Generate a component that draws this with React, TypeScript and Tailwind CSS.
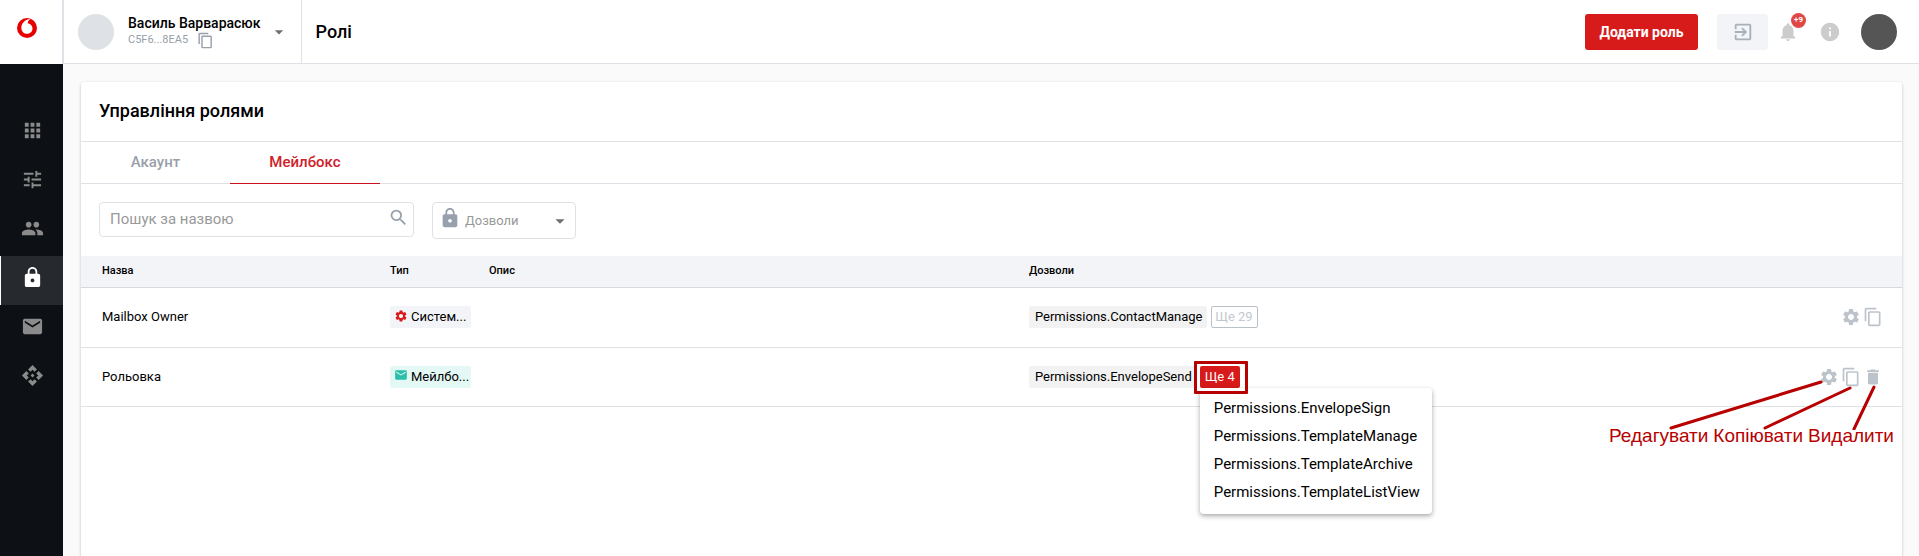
import type { ReactNode } from "react";
import {
  MdApi,
  MdApps,
  MdArrowDropDown,
  MdContentCopy,
  MdDelete,
  MdEmail,
  MdExitToApp,
  MdGroup,
  MdInfo,
  MdLock,
  MdNotifications,
  MdSearch,
  MdSettings,
  MdTune,
} from "react-icons/md";

const navItems = [
  { label: "Застосунки", icon: <MdApps size={23} /> },
  { label: "Налаштування", icon: <MdTune size={23} /> },
  { label: "Користувачі", icon: <MdGroup size={23} /> },
  { label: "Ролі", icon: <MdLock size={23} />, active: true },
  { label: "Пошта", icon: <MdEmail size={23} /> },
  { label: "API", icon: <MdApi size={23} /> },
];

const hiddenPermissions = [
  "Permissions.EnvelopeSign",
  "Permissions.TemplateManage",
  "Permissions.TemplateArchive",
  "Permissions.TemplateListView",
];

function Logo() {
  return (
    <svg viewBox="0 0 20 20" className="size-5" aria-hidden="true">
      <circle cx="10" cy="10" r="10" fill="#e60000" />
      <path
        d="M10.1 15.8c-3 0-5.800-2.300-5.800-6.100C4.300 7.100 5.700 4.700 7.500 3.200 9.200 1.800 11.400 1 13.500 1c.2 0 .4 0 .5.1-1.800.4-3.200 2-3.200 3.900v.2c3.100.8 4.700 2.700 4.700 5.300 0 2.800-2.200 5.300-5.400 5.300z"
        fill="#fff"
      />
    </svg>
  );
}

function Sidebar() {
  return (
    <aside className="flex w-[63px] shrink-0 flex-col bg-[#0d1014]">
      <a
        href="#home"
        aria-label="Головна"
        className="flex h-16 items-start border-r border-[#dee2e6] bg-white pt-[18px] pl-[17px]"
      >
        <Logo />
      </a>
      <nav className="flex flex-col pt-[45px]">
        {navItems.map((item) => (
          <a
            key={item.label}
            href="#nav"
            aria-label={item.label}
            className={
              item.active
                ? "flex h-[49px] items-start justify-center border-l border-white bg-[#26292d] pt-[10px] text-white"
                : "flex h-[49px] items-start justify-center border-l border-transparent pt-[10px] text-[#8b8b8b]"
            }
          >
            {item.icon}
          </a>
        ))}
      </nav>
    </aside>
  );
}

function Header() {
  return (
    <header className="flex h-16 shrink-0 items-center border-b border-[#dee2e6] bg-white">
      <div className="flex h-full items-center border-x border-[#dee2e6] pr-3 pl-[14px]">
        <span className="size-9 rounded-full bg-[#dee2e6]" />
        <div className="ml-[14px] flex flex-col">
          <span className="text-sm leading-[18px] font-medium">Василь Варварасюк</span>
          <span className="flex h-[18px] items-center gap-[9px] text-[11px] text-[#98a0aa]">
            C5F6...8EA5
            <button type="button" aria-label="Копіювати">
              <MdContentCopy size={17} />
            </button>
          </span>
        </div>
        <button type="button" aria-label="Змінити акаунт" className="ml-2 text-[#6b7075]">
          <MdArrowDropDown size={20} />
        </button>
      </div>
      <h1 className="flex-1 pl-[14px] text-lg font-medium">Ролі</h1>
      <div className="flex items-center pr-[22px]">
        <button
          type="button"
          className="h-9 w-[113px] rounded-[3px] bg-[#d71a1a] text-sm font-bold text-white"
        >
          Додати роль
        </button>
        <button
          type="button"
          aria-label="Увійти"
          className="ml-[19px] flex h-9 w-[51px] items-center justify-center rounded-[3px] bg-[#f3f4f7] text-[#a8b0b8]"
        >
          <MdExitToApp size={22} />
        </button>
        <button type="button" aria-label="Сповіщення" className="relative ml-[9px] text-[#ccc]">
          <MdNotifications size={22} />
          <span className="absolute -top-2 left-[14px] flex size-[15px] items-center justify-center rounded-full bg-[#e04848] text-[8px] leading-none font-bold text-white">
            +9
          </span>
        </button>
        <button type="button" aria-label="Інформація" className="ml-5 text-[#ccc]">
          <MdInfo size={22} />
        </button>
        <span className="ml-5 size-9 rounded-full bg-[#555]" />
      </div>
    </header>
  );
}

function Filters() {
  return (
    <div className="flex items-start gap-[18px] px-[18px] pt-[18px] pb-[17px]">
      <label className="flex h-[35px] w-[315px] items-center rounded-[4px] border border-[#dee2e6] pr-1 pl-[10px]">
        <input
          type="text"
          aria-label="Пошук за назвою"
          placeholder="Пошук за назвою"
          className="min-w-0 flex-1 text-[15px] outline-none placeholder:text-[#999]"
        />
        <MdSearch size={21} className="mb-1 text-[#98a0aa]" />
      </label>
      <div className="relative flex h-[37px] w-36 items-center rounded-[4px] border border-[#dee2e6]">
        <MdLock size={22} className="absolute top-1 left-[6px] text-[#98a0ae]" />
        <select
          aria-label="Дозволи"
          className="h-full w-full appearance-none pl-8 text-[13px] text-[#999] outline-none"
        >
          <option>Дозволи</option>
        </select>
        <MdArrowDropDown size={22} className="pointer-events-none absolute right-1 text-[#6b7075]" />
      </div>
    </div>
  );
}

function Action({ label, children }: { label: string; children: ReactNode }) {
  return (
    <button type="button" aria-label={label} className="flex w-[22px] justify-center">
      {children}
    </button>
  );
}

function ActionNotes() {
  return (
    <div className="pointer-events-none absolute top-[28px] right-[8px] w-[285px] text-[#b80000]">
      <svg
        viewBox="0 0 285 54"
        className="block h-[54px] w-full"
        fill="none"
        stroke="currentColor"
        strokeWidth="3"
        strokeLinecap="round"
        aria-hidden="true"
      >
        <path d="M62 52 212 6M156 52 241 12M245 53 265 11" />
      </svg>
      <div className="-mt-1 flex justify-between font-['Liberation_Sans',sans-serif] text-[19px] leading-5 whitespace-nowrap">
        <span>Редагувати</span>
        <span>Копіювати</span>
        <span>Видалити</span>
      </div>
    </div>
  );
}

function PermissionsMenu() {
  return (
    <div className="relative">
      <button
        type="button"
        aria-expanded="true"
        className="block h-[22px] w-10 rounded-[2px] bg-[#d71a1a] text-[13px] leading-[22px] text-white"
      >
        Ще 4
      </button>
      <ul className="absolute top-[22px] left-0 z-10 rounded-[4px] bg-white pt-[6px] pr-3 pb-2 pl-[14px] text-[15px] leading-7 whitespace-nowrap shadow-[0_2px_5px_rgba(0,0,0,0.35)]">
        {hiddenPermissions.map((name) => (
          <li key={name}>{name}</li>
        ))}
      </ul>
      <span className="pointer-events-none absolute -top-[5px] -left-[6px] z-20 h-[33px] w-[54px] rounded-[1px] border-3 border-[#b80000] shadow-[inset_0_0_0_2px_#fff]" />
    </div>
  );
}

function RolesTable() {
  return (
    <table className="w-full table-fixed border-separate border-spacing-0 text-left text-[13px]">
      <colgroup>
        <col className="w-[299px]" />
        <col className="w-[99px]" />
        <col className="w-[29.65%]" />
        <col />
        <col className="w-[150px]" />
      </colgroup>
      <thead>
        <tr className="h-8 bg-[#f3f4f7] text-[11px] *:border-b *:border-[#d5d8dc]">
          <th className="pl-[21px] font-medium">Назва</th>
          <th className="pl-[10px] font-medium">Тип</th>
          <th className="pl-[10px] font-medium">Опис</th>
          <th className="pl-[10px] font-medium">Дозволи</th>
          <th aria-label="Дії" />
        </tr>
      </thead>
      <tbody>
        <tr className="h-[60px] *:border-b *:border-[#dee2e6] *:pb-px">
          <td className="pl-[21px]">Mailbox Owner</td>
          <td className="pl-[10px]">
            <span className="flex h-[22px] w-[81px] items-center gap-[3px] rounded-[2px] bg-[#f3f4f7] pl-1">
              <MdSettings size={14} className="mb-[3px] shrink-0 text-[#d71a1a]" />
              Систем...
            </span>
          </td>
          <td />
          <td className="pl-[10px]">
            <div className="flex gap-1">
              <span className="rounded-[2px] bg-[#f2f2f2] pr-1 pl-[6px] leading-[22px]">
                Permissions.ContactManage
              </span>
              <button
                type="button"
                className="h-[22px] w-[47px] rounded-[2px] border border-[#b9c0c8] leading-5 text-[#c4c8ce]"
              >
                Ще 29
              </button>
            </div>
          </td>
          <td>
            <div className="flex justify-end pr-[18px] text-[#bcc3cb]">
              <Action label="Редагувати">
                <MdSettings size={20} />
              </Action>
              <Action label="Копіювати">
                <MdContentCopy size={20} />
              </Action>
            </div>
          </td>
        </tr>
        <tr className="h-[59px] *:border-b *:border-[#dee2e6] *:pb-px">
          <td className="pl-[21px]">Рольовка</td>
          <td className="pl-[10px]">
            <span className="flex h-[22px] w-[81px] items-center gap-[3px] rounded-[2px] bg-[#e4f8f5] pl-1">
              <MdEmail size={14} className="mb-[3px] shrink-0 text-[#2bbfa9]" />
              Мейлбо...
            </span>
          </td>
          <td />
          <td className="pl-[10px]">
            <div className="flex gap-1">
              <span className="rounded-[2px] bg-[#f2f2f2] pr-1 pl-[6px] leading-[22px]">
                Permissions.EnvelopeSend
              </span>
              <PermissionsMenu />
            </div>
          </td>
          <td className="relative">
            <div className="flex justify-end pr-[18px] text-[#bcc3cb]">
              <Action label="Редагувати">
                <MdSettings size={20} />
              </Action>
              <Action label="Копіювати">
                <MdContentCopy size={20} />
              </Action>
              <Action label="Видалити">
                <MdDelete size={20} />
              </Action>
            </div>
            <ActionNotes />
          </td>
        </tr>
      </tbody>
    </table>
  );
}

export default function App() {
  return (
    <div className="flex min-h-screen bg-[#fafafa] font-[Roboto,sans-serif] text-black">
      <Sidebar />
      <div className="flex min-w-0 flex-1 flex-col">
        <Header />
        <main className="mt-[18px] mr-[17px] ml-[18px] flex-1 rounded-t-[4px] bg-white shadow-[0_1px_3px_rgba(0,0,0,0.25)]">
          <h2 className="border-b border-[#dee2e6] px-[18px] pt-[15px] pb-4 text-lg leading-7 font-medium">
            Управління ролями
          </h2>
          <div role="tablist" className="flex h-[42px] border-b border-[#dee2e6] text-[15px] font-medium">
            <button type="button" role="tab" aria-selected="false" className="w-[149px] text-[#98a0aa]">
              Акаунт
            </button>
            <button
              type="button"
              role="tab"
              aria-selected="true"
              className="-mb-px w-[150px] border-b border-[#c9141c] text-[#d0202a]"
            >
              Мейлбокс
            </button>
          </div>
          <Filters />
          <RolesTable />
        </main>
      </div>
    </div>
  );
}
